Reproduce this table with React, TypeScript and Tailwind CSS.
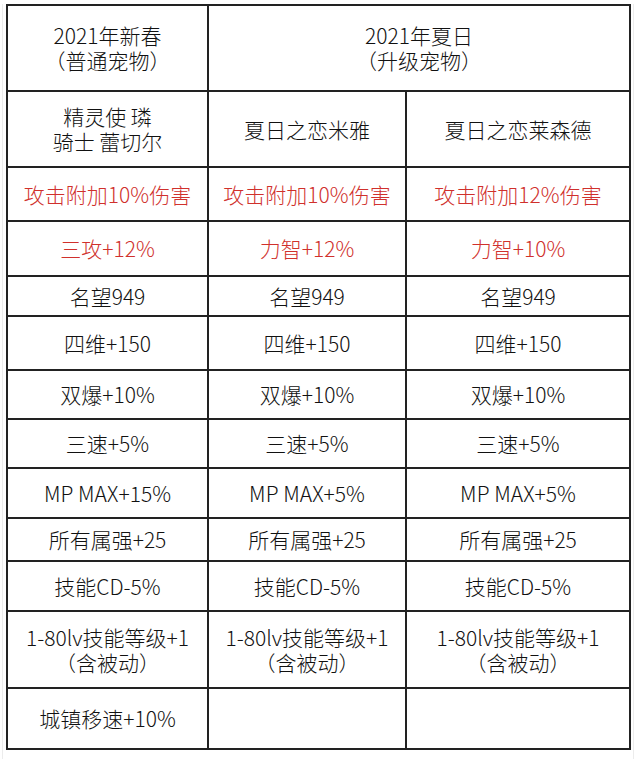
const font = { fontFamily: '"Noto Sans CJK SC", "Noto Sans", sans-serif' }

type Cell = { lines: string[]; red?: boolean; span?: boolean }

const heights = ["h-[84px]", "h-[74px]", "h-[52px]", "h-[53px]", "h-[38px]", "h-[52px]", "h-[47px]", "h-[47px]", "h-[48px]", "h-[41px]", "h-[48px]", "h-[75px]", "h-[59px]"]

const rows: Cell[][] = [
  [{ lines: ["2021年新春", "（普通宠物）"] }, { lines: ["2021年夏日", "（升级宠物）"], span: true }],
  [{ lines: ["精灵使 璘", "骑士 蕾切尔"] }, { lines: ["夏日之恋米雅"] }, { lines: ["夏日之恋莱森德"] }],
  [
    { lines: ["攻击附加10%伤害"], red: true },
    { lines: ["攻击附加10%伤害"], red: true },
    { lines: ["攻击附加12%伤害"], red: true },
  ],
  [
    { lines: ["三攻+12%"], red: true },
    { lines: ["力智+12%"], red: true },
    { lines: ["力智+10%"], red: true },
  ],
  [{ lines: ["名望949"] }, { lines: ["名望949"] }, { lines: ["名望949"] }],
  [{ lines: ["四维+150"] }, { lines: ["四维+150"] }, { lines: ["四维+150"] }],
  [{ lines: ["双爆+10%"] }, { lines: ["双爆+10%"] }, { lines: ["双爆+10%"] }],
  [{ lines: ["三速+5%"] }, { lines: ["三速+5%"] }, { lines: ["三速+5%"] }],
  [{ lines: ["MP MAX+15%"] }, { lines: ["MP MAX+5%"] }, { lines: ["MP MAX+5%"] }],
  [{ lines: ["所有属强+25"] }, { lines: ["所有属强+25"] }, { lines: ["所有属强+25"] }],
  [{ lines: ["技能CD-5%"] }, { lines: ["技能CD-5%"] }, { lines: ["技能CD-5%"] }],
  [
    { lines: ["1-80lv技能等级+1", "（含被动）"] },
    { lines: ["1-80lv技能等级+1", "（含被动）"] },
    { lines: ["1-80lv技能等级+1", "（含被动）"] },
  ],
  [{ lines: ["城镇移速+10%"] }, { lines: [] }, { lines: [] }],
]

export default function App() {
  return (
    <div className="flex h-[759px] w-[640px] bg-white pt-[4px]" style={font}>
      <div className="w-[6px] pl-[2px]">
        <div className="h-full w-px bg-[#ececec]" />
      </div>
      <div className="grid w-[625px] grid-cols-[199px_196px_222px] gap-[2px] self-start bg-[#222] p-[2px]">
        {rows.map((row, r) =>
          row.map((c, i) => (
            <div
              key={`${r}-${i}`}
              className={`flex flex-col items-center justify-center bg-white text-[21px] font-light leading-[25px] ${heights[r]} ${
                c.span ? "col-span-2" : ""
              } ${c.red ? "text-[#d0302c]" : "text-[#111]"}`}
            >
              {c.lines.map((l) => (
                <span key={l} className="whitespace-pre">
                  {l}
                </span>
              ))}
            </div>
          ))
        )}
      </div>
      <div className="pl-[2px]">
        <div className="h-full w-px bg-[#ececec]" />
      </div>
    </div>
  )
}
